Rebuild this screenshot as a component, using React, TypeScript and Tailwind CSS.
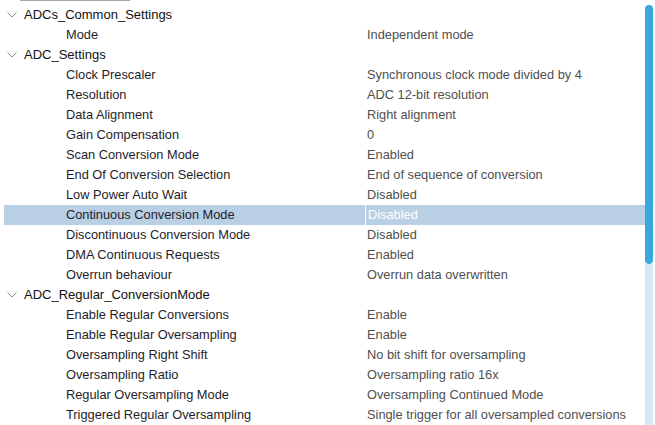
import React from "react";

type Row = { label: string; value?: string; group?: boolean; selected?: boolean };

const rows: Row[] = [
    { label: "ADCs_Common_Settings", group: true },
    { label: "Mode", value: "Independent mode" },
    { label: "ADC_Settings", group: true },
    { label: "Clock Prescaler", value: "Synchronous clock mode divided by 4" },
    { label: "Resolution", value: "ADC 12-bit resolution" },
    { label: "Data Alignment", value: "Right alignment" },
    { label: "Gain Compensation", value: "0" },
    { label: "Scan Conversion Mode", value: "Enabled" },
    { label: "End Of Conversion Selection", value: "End of sequence of conversion" },
    { label: "Low Power Auto Wait", value: "Disabled" },
    { label: "Continuous Conversion Mode", value: "Disabled", selected: true },
    { label: "Discontinuous Conversion Mode", value: "Disabled" },
    { label: "DMA Continuous Requests", value: "Enabled" },
    { label: "Overrun behaviour", value: "Overrun data overwritten" },
    { label: "ADC_Regular_ConversionMode", group: true },
    { label: "Enable Regular Conversions", value: "Enable" },
    { label: "Enable Regular Oversampling", value: "Enable" },
    { label: "Oversampling Right Shift", value: "No bit shift for oversampling" },
    { label: "Oversampling Ratio", value: "Oversampling ratio 16x" },
    { label: "Regular Oversampling Mode", value: "Oversampling Continued Mode" },
    { label: "Triggered Regular Oversampling", value: "Single trigger for all oversampled conversions" },
];

function Chevron() {
    return (
        <svg width="10" height="6" viewBox="0 0 10 6" className="shrink-0">
            <path d="M0.5 0.5 L5 5 L9.5 0.5" fill="none" stroke="#8a8a8a" strokeWidth="1" />
        </svg>
    );
}

export default function App() {
    return (
        <div
            className="w-[655px] h-[425px] bg-white overflow-hidden flex text-[12.8px]"
            style={{ fontFamily: "'Liberation Sans', Arial, sans-serif" }}
        >
            <div className="flex-1 flex flex-col">
                <div className="h-[5px] pl-[20px]">
                    <div className="w-[110px] h-[1px] bg-[#a6a6a6]" />
                </div>
                {rows.map((r, i) =>
                    r.group ? (
                        <div key={i} className="h-[20px] flex items-center pl-[7px] text-[#111] text-[13px]">
                            <Chevron />
                            <span className="ml-[7px]">{r.label}</span>
                        </div>
                    ) : (
                        <div
                            key={i}
                            className={`h-[20px] ml-[4px] flex items-center ${r.selected ? "bg-[#b9cfe4]" : ""}`}
                        >
                            <span className="w-[361px] pl-[62px] text-[#1e1e2a] whitespace-nowrap">{r.label}</span>
                            <span
                                className={`h-full flex items-center pl-[2px] whitespace-nowrap ${
                                    r.selected ? "border-l border-white text-white" : "text-[#4f4f4f]"
                                }`}
                            >
                                {r.value}
                            </span>
                        </div>
                    )
                )}
            </div>
            <div className="w-[8px] mr-[2px] mt-[5px] flex flex-col">
                <div className="h-[259px] rounded-[4px] bg-[#3ba8dc]" />
                <div className="flex-1 bg-[#d8e7f5]" />
            </div>
        </div>
    );
}
